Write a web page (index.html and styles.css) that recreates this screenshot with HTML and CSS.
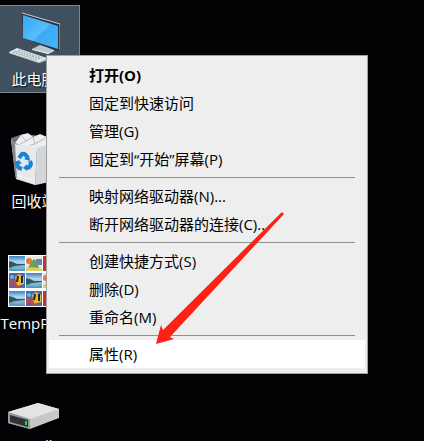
FILE: index.html
```html
<!DOCTYPE html>
<html lang="zh">

<head>
    <meta charset="UTF-8">
    <title>桌面</title>
    <link rel="stylesheet" href="styles.css">
</head>

<body>
    <main class="desktop">
        <div class="icons">
            <button class="icon selected">
                <svg viewBox="0 0 52 52">
                    <defs>
                        <linearGradient id="screen" x1="0" y1="0" x2="1" y2="1">
                            <stop offset="0" stop-color="#35a5f5" />
                            <stop offset="0.5" stop-color="#58bdfb" />
                            <stop offset="0.55" stop-color="#3caaf5" />
                            <stop offset="1" stop-color="#45b4fa" />
                        </linearGradient>
                    </defs>
                    <path d="M14 2 L52 13 V39 L50 40 L15 27 Z" fill="#26313b" />
                    <path d="M14 2 L52 13 V39" fill="none" stroke="#c9d3d9" />
                    <path d="M15 4 L50 15 V38 L15 27 Z" fill="url(#screen)" />
                    <path d="M32 34 L38 36 L46 39 L40 43 L24 38 Z" fill="#bdc8cc" />
                    <path d="M24 38 L40 42 L46 39 V40 L40 43 L24 39 Z" fill="#eff4f5" />
                    <path d="M9 37 L39 47 V49 L31 52 L1 42 V41 Z" fill="#e1e7ea" />
                    <path d="M1 41 L31 51 L39 47 V49 L31 52 L1 42 Z" fill="#b4bfc6" />
                    <path d="M10 39 L34 47 M7 40 L32 48 M5 41 L29 49" fill="none" stroke="#8e9ba5" stroke-width="1" stroke-dasharray="2 1" />
                </svg>
                <span>此电脑</span>
            </button>
            <button class="icon">
                <svg viewBox="0 0 52 52">
                    <path d="M3 5 L15 1 L43 4 L50 7 L46 48 L28 52 L8 46 Z" fill="#6f7478" />
                    <path d="M7 10 L13 2 L20 0 L25 4 L32 1 L39 4 L42 10 L45 14 L27 18 Z" fill="#eceeef" />
                    <path d="M13 2 L18 8 L25 4 L27 11 L34 7 L39 4 M18 8 L12 11 M27 11 L22 12" fill="none" stroke="#b8bcbf" />
                    <path d="M3 6 L7 11 L29 15 L27 52 L8 46 Z" fill="#e6e8ea" />
                    <path d="M29 15 L49 9 L45 48 L27 52 Z" fill="#d3d6d8" />
                    <path d="M3 6 L7 11 L9 46 L7 42 Z" fill="#83888c" />
                    <path d="M9 42 L27 48" fill="none" stroke="#f6f7f8" />
                    <g fill="none" stroke="#1b83d4" stroke-width="4">
                        <path d="M11 25 L14 21 Q17 20 19 24" />
                        <path d="M22 28 L23 31 Q22 35 18 35" />
                        <path d="M14 36 L11 35 Q8 32 10 29" />
                    </g>
                    <path d="M21 22 L22 28 L16 26 Z M19 31 V38 L15 35 Z M6 30 L11 27 L14 31 Z" fill="#1b83d4" />
                </svg>
                <span>回收站</span>
            </button>
            <button class="icon">
                <svg viewBox="0 0 52 52">
                    <defs>
                        <linearGradient id="sky" x1="0" y1="0" x2="0" y2="1">
                            <stop offset="0" stop-color="#3b80c4" />
                            <stop offset="0.4" stop-color="#b9d9ed" />
                            <stop offset="1" stop-color="#4f93bb" />
                        </linearGradient>
                        <g id="lake">
                            <path d="M0 0 H16 V15 H0 Z" fill="url(#sky)" />
                            <path d="M0 5 L4 6 L8 8 L16 8 V9 L6 10 L0 12 Z" fill="#2b5a60" />
                            <path d="M5 12 L16 10 V12 L7 13 Z" fill="#7fb6d2" />
                        </g>
                        <g id="shapes">
                            <path d="M0 0 H16 V15 H0 Z" fill="#e4e9dc" />
                            <circle cx="3" cy="5" r="3" fill="#e8743a" />
                            <path d="M10 3 H16 V9 H10 Z" fill="#6a7fc0" />
                            <path d="M8 3 Q12 6 13 13 H2 Q4 6 8 3 Z" fill="#69a257" />
                            <path d="M0 12 Q8 10 16 13 V15 H0 Z" fill="#dfcf63" />
                        </g>
                        <g id="fish">
                            <path d="M0 0 H16 V15 H0 Z" fill="#3f6fb0" />
                            <path d="M6 4 L10 1 L15 4 V11 L8 13 Z" fill="#f0bb2b" />
                            <path d="M9 3 L8 9 M13 3 V10" stroke="#2a2522" stroke-width="2" />
                            <path d="M0 6 L4 9 L6 8 L8 12 L13 15 H0 Z" fill="#cf453a" />
                            <path d="M2 11 L7 13 L5 15 H1 Z" fill="#4e63bd" />
                            <circle cx="3" cy="4" r="2" fill="#76b2d6" />
                        </g>
                    </defs>
                    <path d="M0 0 H52 V52 H0 Z" fill="#fff" />
                    <use href="#lake" x="1" y="1" />
                    <use href="#shapes" x="18" y="1" />
                    <use href="#fish" x="35" y="1" />
                    <use href="#fish" x="1" y="18" />
                    <use href="#lake" x="18" y="18" />
                    <use href="#shapes" x="35" y="18" />
                    <use href="#lake" x="1" y="36" />
                    <use href="#fish" x="18" y="36" />
                    <use href="#fish" x="35" y="36" />
                    <path d="M35 1 H39 V16 H35 Z M35 36 H39 V51 H35 Z" fill="#be3434" />
                </svg>
                <span>TempPics</span>
            </button>
            <button class="icon">
                <svg viewBox="0 0 52 52">
                    <path d="M0 35 L30 26 L51 32 V41 L22 52 L0 46 Z" fill="#c8c8ca" />
                    <path d="M0 35 L30 26 L51 32 L22 42 Z" fill="#e3e3e5" />
                    <path d="M0 35 L22 42 V52 L0 46 Z" fill="#96989a" />
                    <path d="M2 38 L20 43 V50 L2 45 Z" fill="#2d3234" />
                    <path d="M17 44 H19 V48 H17 Z" fill="#25d63c" />
                </svg>
                <span>small</span>
            </button>
        </div>

        <div class="menu">
            <button class="item default">打开(O)</button>
            <button class="item">固定到快速访问</button>
            <button class="item">管理(G)</button>
            <button class="item">固定到“开始”屏幕(P)</button>
            <hr>
            <button class="item">映射网络驱动器(N)...</button>
            <button class="item">断开网络驱动器的连接(C)...</button>
            <hr>
            <button class="item">创建快捷方式(S)</button>
            <button class="item">删除(D)</button>
            <button class="item">重命名(M)</button>
            <hr>
            <button class="item active">属性(R)</button>
        </div>

        <!-- 指向“属性”的箭头 -->
        <svg class="arrow" viewBox="0 0 128 132">
            <path d="M0 132 L5 113 L7 118 L126 0 L128 2 L14 125 L18 127 Z" fill="#ff2115" />
        </svg>
    </main>
</body>

</html>
```

FILE: styles.css
```css
* {
    box-sizing: border-box;
}

body {
    margin: 0;
    background: #020205;
    font-family: "Open Sans", "Noto Sans CJK SC", sans-serif;
    font-size: 15px;
    overflow: hidden;
}

button {
    border: 0;
    padding: 0;
    background: none;
    font: inherit;
    cursor: default;
}

.desktop {
    position: relative;
    height: 100vh;
    overflow: hidden;
}

/* 桌面图标 */
.icons {
    display: flex;
    flex-direction: column;
    gap: 34px;
    width: 92px;
    margin-left: -12px;
    padding-top: 5px;
}

.icon {
    display: flex;
    flex-direction: column;
    align-items: center;
    gap: 4px;
    height: 88px;
    flex-shrink: 0;
    padding-top: 5px;
    border: 1px solid transparent;
    color: #fff;
    line-height: 24px;
    text-shadow: 1px 1px 2px #000;
}

.icon svg {
    width: 52px;
    height: 52px;
    flex-shrink: 0;
}

.icon.selected {
    background: #41505f;
    border-color: #7c8791;
}

/* 右键菜单 */
.menu {
    position: absolute;
    left: 46px;
    top: 55px;
    display: flex;
    flex-direction: column;
    width: 322px;
    padding: 5px 2px;
    background: #eee;
    border: 1px solid #a0a0a0;
}

.item {
    height: 28px;
    padding-left: 40px;
    color: #000;
    line-height: 28px;
    text-align: left;
    white-space: nowrap;
}

.item.default {
    font-weight: bold;
}

.item.active {
    background: #fff;
}

.menu hr {
    width: auto;
    height: 1px;
    margin: 4px 10px;
    border: 0;
    background: #919191;
}

.arrow {
    position: absolute;
    left: 156px;
    top: 212px;
    width: 128px;
    height: 132px;
    pointer-events: none;
}
```
